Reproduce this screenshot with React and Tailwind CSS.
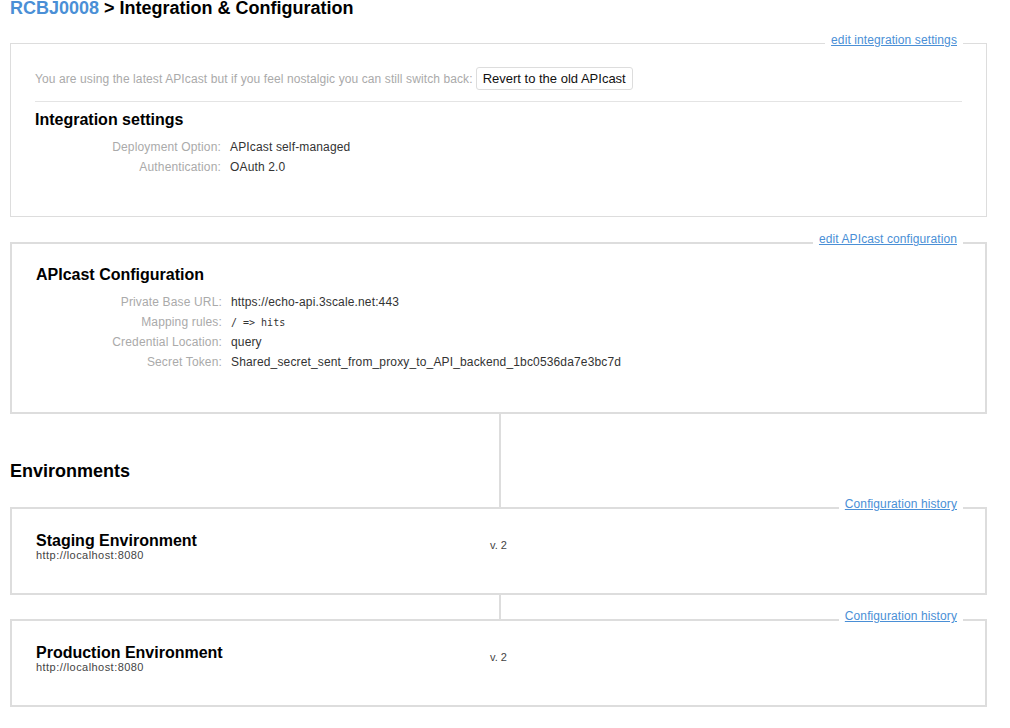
const blue = 'text-[#4a8fd6]';

function CornerLink({ children, thick }) {
  return (
    <a
      href="#"
      className={`absolute ${thick ? '-top-[13px] right-[22px]' : '-top-[12px] right-[23px]'} bg-white px-[6px] text-[12px] leading-[16px] tracking-[0.1px] underline ${blue}`}
    >
      {children}
    </a>
  );
}

function Field({ label, children, mono }) {
  return (
    <div className="flex h-[20px] items-center text-[12px] tracking-[0.15px]">
      <dt className="w-[186px] text-right text-[#aaa]">{label}</dt>
      <dd
        className={
          mono
            ? "ml-[9px] text-[10px] tracking-normal text-[#333] font-['DejaVu_Sans_Mono',monospace]"
            : 'ml-[9px] text-[#333]'
        }
      >
        {children}
      </dd>
    </div>
  );
}

function Connector({ height, children }) {
  return (
    <div className={`flex ${height}`}>
      <div className="flex w-[489px] items-end">{children}</div>
      <div className="w-[2px] bg-[#ddd]" />
    </div>
  );
}

function EnvBox({ title, url, version }) {
  return (
    <section className="relative flex h-[88px] border-2 border-[#ddd] pl-[24px] pt-[23px]">
      <CornerLink thick>Configuration history</CornerLink>
      <div className="w-[454px]">
        <h3 className="text-[16px] font-bold leading-[17px] text-black">{title}</h3>
        <p className="text-[11px] leading-[12px] tracking-[0.45px] text-[#444]">{url}</p>
      </div>
      <div className="pt-[7px] text-[11px] leading-[12px] text-[#444]">{version}</div>
    </section>
  );
}

export default function App() {
  return (
    <div className="min-h-screen bg-white font-['Liberation_Sans',Arial,sans-serif] text-[#333]">
      <div className="w-[977px] pl-[10px] box-content">
        <h1 className="-mt-[3px] text-[18px] font-bold leading-[22px] text-black">
          <span className={blue}>RCBJ0008</span> &gt; Integration &amp; Configuration
        </h1>

        <section className="relative mt-[24px] h-[174px] border border-[#ddd] px-[24px] pt-[23px]">
          <CornerLink>edit integration settings</CornerLink>
          <div className="flex h-[23px] items-center text-[12px]">
            <span className="tracking-[0.1px] text-[#aaa]">
              You are using the latest APIcast but if you feel nostalgic you can still switch back:
            </span>
            <button className="ml-[3px] h-[23px] rounded-[3px] border border-[#ddd] bg-white px-[6px] text-[13px] text-[#111]">
              Revert to the old APIcast
            </button>
          </div>
          <hr className="mt-[11px] border-t border-[#e4e4e4]" />
          <h2 className="mt-[9px] text-[16px] font-bold leading-[18px] text-black">Integration settings</h2>
          <dl className="mt-[8px]">
            <Field label="Deployment Option:">APIcast self-managed</Field>
            <Field label="Authentication:">OAuth 2.0</Field>
          </dl>
        </section>

        <section className="relative mt-[25px] h-[172px] border-2 border-[#ddd] px-[24px] pt-[22px]">
          <CornerLink thick>edit APIcast configuration</CornerLink>
          <h2 className="text-[16px] font-bold leading-[18px] text-black">APIcast Configuration</h2>
          <dl className="mt-[8px]">
            <Field label="Private Base URL:">https://echo-api.3scale.net:443</Field>
            <Field label="Mapping rules:" mono>/ =&gt; hits</Field>
            <Field label="Credential Location:">query</Field>
            <Field label="Secret Token:">Shared_secret_sent_from_proxy_to_API_backend_1bc0536da7e3bc7d</Field>
          </dl>
        </section>

        <Connector height="h-[93px]">
          <h2 className="pb-[26px] text-[18px] font-bold leading-[20px] text-black">Environments</h2>
        </Connector>

        <EnvBox title="Staging Environment" url="http://localhost:8080" version="v. 2" />
        <Connector height="h-[24px]" />
        <EnvBox title="Production Environment" url="http://localhost:8080" version="v. 2" />
      </div>
    </div>
  );
}
